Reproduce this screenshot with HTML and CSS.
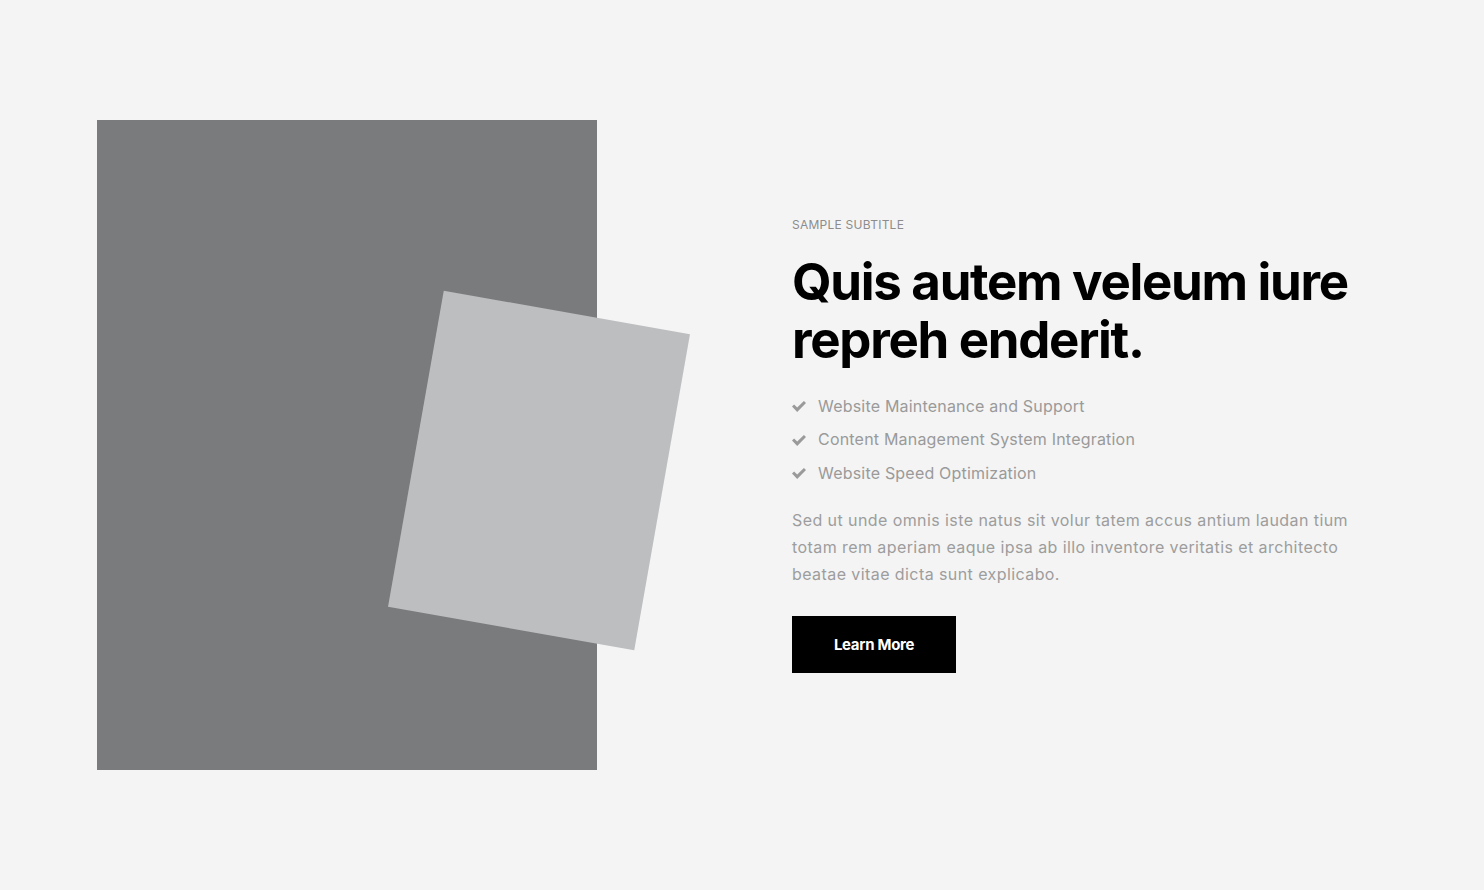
FILE: index.html
```html
<!DOCTYPE html>
<html lang="en">
<head>
<meta charset="utf-8">
<title>About</title>
<link rel="stylesheet" href="styles.css">
</head>
<body>
<section class="about">
  <div class="container">
    <div class="media">
      <div class="media-main"></div>
      <div class="media-card"></div>
    </div>
    <div class="content">
      <p class="subtitle">SAMPLE SUBTITLE</p>
      <h2 class="title">Quis autem veleum iure repreh enderit.</h2>
      <ul class="checks">
        <li><svg class="check" viewBox="0 0 14 11" width="14" height="11"><path d="M0 5.6 L2.1 3.5 L5.2 6.6 L11.9 0 L14 2.1 L5.2 10.9 Z" fill="currentColor"/></svg>Website Maintenance and Support</li>
        <li><svg class="check" viewBox="0 0 14 11" width="14" height="11"><path d="M0 5.6 L2.1 3.5 L5.2 6.6 L11.9 0 L14 2.1 L5.2 10.9 Z" fill="currentColor"/></svg>Content Management System Integration</li>
        <li><svg class="check" viewBox="0 0 14 11" width="14" height="11"><path d="M0 5.6 L2.1 3.5 L5.2 6.6 L11.9 0 L14 2.1 L5.2 10.9 Z" fill="currentColor"/></svg>Website Speed Optimization</li>
      </ul>
      <p class="text">Sed ut unde omnis iste natus sit volur tatem accus antium laudan tium totam rem aperiam eaque ipsa ab illo inventore veritatis et architecto beatae vitae dicta sunt explicabo.</p>
      <a class="btn" href="#">Learn More</a>
    </div>
  </div>
</section>
</body>
</html>
```
FILE: styles.css
```css
* { box-sizing: border-box; }
html, body { margin: 0; padding: 0; }
body {
  background: #f4f4f4;
  font-family: Inter, "Noto Sans", sans-serif;
  color: #999;
}
.about { padding: 120px 0; }
.container {
  width: 1290px;
  margin: 0 auto;
  display: flex;
  align-items: center;
}
.media {
  width: 695px;
  flex: none;
  position: relative;
}
.media-main {
  width: 500px;
  height: 650px;
  background: #7a7b7c;
}
.media-card {
  position: absolute;
  width: 250px;
  height: 321px;
  left: 317px;
  top: 190px;
  background: #bdbec0;
  transform: rotate(10deg);
}
.content {
  flex: none;
  width: 575px;
}
.subtitle {
  margin: 0 0 20px;
  font-size: 12px;
  line-height: 16px;
  color: #8c8c8c;
  letter-spacing: 0.25px;
}
.title {
  margin: 0 0 21px;
  font-size: 51px;
  line-height: 58px;
  font-weight: 700;
  color: #000;
  letter-spacing: -1.3px;
}
.checks {
  list-style: none;
  margin: 0 0 17px;
  padding: 0;
}
.checks li {
  display: flex;
  align-items: center;
  font-size: 16px;
  line-height: 33.5px;
  color: #9a9a9a;
  letter-spacing: 0.2px;
}
.check {
  color: #9a9a9a;
  margin-right: 12px;
  flex: none;
}
.text {
  margin: 0 0 28px;
  font-size: 16px;
  line-height: 27px;
  color: #9d9d9d;
  letter-spacing: 0.42px;
  max-width: 570px;
}
.btn {
  display: inline-flex;
  align-items: center;
  justify-content: center;
  width: 164px;
  height: 57px;
  background: #000;
  color: #fff;
  font-size: 15px;
  font-weight: 700;
  text-decoration: none;
  letter-spacing: -0.3px;
}
```
